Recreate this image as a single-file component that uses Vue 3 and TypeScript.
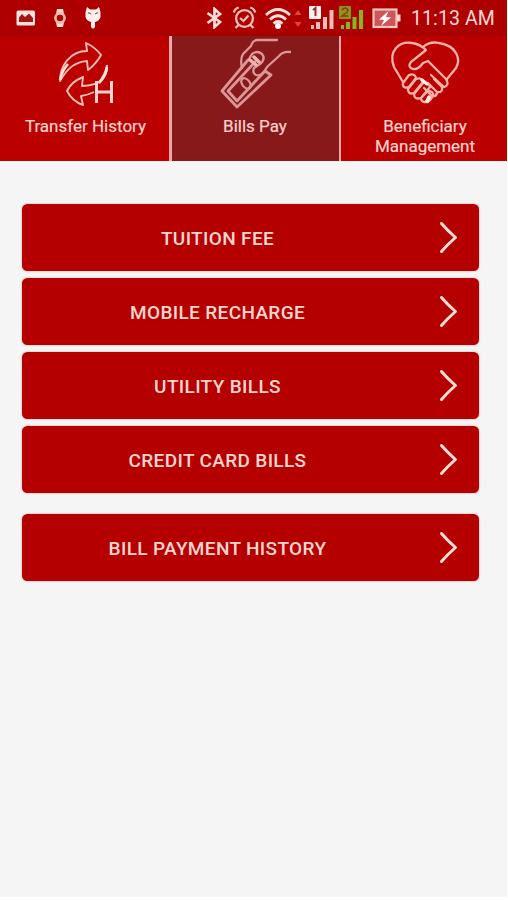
<script setup lang="ts">
interface Bill {
  label: string
  separate?: boolean
}

const bills: Bill[] = [
  { label: 'TUITION FEE' },
  { label: 'MOBILE RECHARGE' },
  { label: 'UTILITY BILLS' },
  { label: 'CREDIT CARD BILLS' },
  { label: 'BILL PAYMENT HISTORY', separate: true },
]
</script>

<template>
  <div class="screen">
    <header class="status">
      <div class="notices">
        <svg width="20" height="18" viewBox="0 0 20 18">
          <rect x="0.5" y="1.5" width="18.5" height="15" rx="1.5" fill="#fbe4e0" />
          <path d="M3 13V8.500l3-3.500 3 3 4-3.500 4 4.500v4z" fill="#a51512" />
        </svg>
        <svg width="14" height="20" viewBox="0 0 14 20">
          <path d="M4 1h6l1 5H3zM3 14h8l-1 5H4z" fill="#fbdcd8" />
          <circle cx="7" cy="10" r="4.6" fill="#a80808" stroke="#f5b7b0" stroke-width="2.600" />
        </svg>
        <svg width="18" height="24" viewBox="0 0 18 24">
          <path d="M3 1l3 2.500h6L15 1l1.500 5v5q-1 4-5.500 5v5q-2 3-4 0v-5q-4.500-1-5.500-5V6z" fill="#fff0ed" />
          <path d="M4 6.500L7 8M14 6.500L11 8" stroke="#a84d42" stroke-width="1.200" />
        </svg>
      </div>
      <div class="system">
        <svg class="bluetooth" width="16" height="22" viewBox="0 0 16 22" fill="none" stroke="#f8dddd" stroke-width="2.700">
          <path d="M1.500 6L14 15l-5.500 5V2L14 7 1.500 16" />
        </svg>
        <svg class="alarm" width="25" height="24" viewBox="0 0 25 24" fill="none" stroke="#f4bdb9" stroke-width="2.300">
          <circle cx="12.500" cy="12.500" r="8.400" />
          <path d="M8 12l3.500 3 5-5.500M1.800 6.500q1-4 5-5M23.200 6.500q-1-4-5-5M6.500 19l-3 3M18.500 19l3 3" />
        </svg>
        <svg class="wifi" width="28" height="24" viewBox="0 0 28 24" fill="none" stroke="#fae0dd" stroke-width="2.800">
          <path d="M2 9q12-11 24 0M6 13.500q8-7.500 16 0M9.500 17.500q4.500-4 9 0" />
          <circle cx="14" cy="20" r="3" fill="#fff" stroke="none" />
        </svg>
        <svg class="traffic" width="8" height="20" viewBox="0 0 8 20" fill="#e0443f">
          <path d="M4 2l3.500 5h-7zM4 19l3.500-5h-7z" />
        </svg>
        <svg class="signal" width="26" height="26" viewBox="0 0 26 26">
          <path d="M2 20h3v4H2zM7 17h4v7H7zM14 12h4v12h-4zM20.500 5h4v19h-4z" fill="#f0bdb8" />
          <rect width="12" height="13" y="1" rx="1" fill="#fff0ee" />
          <path d="M4 5l2.500-2v8" fill="none" stroke="#8f302e" stroke-width="2" />
        </svg>
        <svg class="signal" width="26" height="26" viewBox="0 0 26 26">
          <path d="M2 20h3v4H2zM7 17h4v7H7zM13.500 12h4v12h-4zM20 5h4v19h-4z" fill="#86b51c" />
          <rect width="12" height="13" y="1" rx="1" fill="#7f9a14" />
          <path d="M3 5q3-4 6 0q0 2-6 6h6" fill="none" stroke="#a82d08" stroke-width="1.500" />
        </svg>
        <svg class="battery" width="29" height="21" viewBox="0 0 29 21">
          <rect x="1.500" y="1.500" width="23" height="17.500" fill="#cf5556" stroke="#f2c6c1" stroke-width="2.200" />
          <path d="M25 6.500h3.500v7H25z" fill="#f8d5d1" />
          <path d="M16.500 3L7 11.500l5 .5-3 6 10-8.500-5-.5z" fill="#fff" />
        </svg>
        <time>11:13 AM</time>
      </div>
    </header>

    <nav class="tabs">
      <div class="tab">
        <svg class="tab-icon" width="169" height="77" viewBox="0 36 169 77" fill="none" stroke="#f7bcb6" stroke-width="1.900" stroke-linejoin="round">
          <path d="M60 81C60 66 70 51 87 51L86 43Q95 47 101 55Q96 64 88 70L87 61C74 62 67 69 60 81Z" />
          <path d="M107 65Q108 85 82 86L83 77Q71 82 67 91Q72 101 83 105L81 96Q88 95 94 92M107 65Q105 76 98 83" />
          <path d="M60 80Q62 71 68 64M107 67Q106 76 99 83" stroke="#ffe3db" stroke-width="2.500" />
          <path d="M96.500 81V103M111.500 81V103M96 92H112" stroke="#f9d4d0" stroke-width="3" stroke-linejoin="miter" />
        </svg>
        <span>Transfer History</span>
      </div>
      <div class="tab active">
        <svg class="tab-icon" width="167" height="77" viewBox="172 36 167 77" fill="none" stroke="#dd9696" stroke-width="2.300" stroke-linejoin="round" stroke-linecap="round">
          <path d="M277 40H257Q253 40 251 46L243 54Q240 59 242 68M290 52Q283 51 279 56L267 67Q262 77 256 75Q252 73 254 68L260 64Q266 59 262 54Q257 50 252 54L249 59" />
          <path d="M248 60L222 91L237 107L271 75L265 71L237 101L228 91L255 62" stroke-width="2.800" />
          <ellipse cx="246" cy="83.500" rx="3.800" ry="6" transform="rotate(-38 246 83.500)" />
          <path d="M250 60L256 65M254 57L259 62" stroke="#edb4b0" stroke-width="3.500" />
        </svg>
        <span>Bills Pay</span>
      </div>
      <div class="tab">
        <svg class="tab-icon" width="166" height="77" viewBox="341 36 166 77" fill="none" stroke="#f9b1aa" stroke-width="2.300" stroke-linejoin="round" stroke-linecap="round">
          <path d="M403 82L394 67C388 51 399 41 412 43Q420 44 426 50L411 62Q407 67 413 69Q418 70 423 63L428 61L446 79Q450 85 444 87L431 75" />
          <path d="M423 47Q430 41 439 43C457 46 461 59 456 68L447 79" />
          <path d="M434 79L442 87Q443 93 437 92L428 83M437 92Q437 97 432 96L424 88M432 96Q431 102 424 102" />
          <path d="M403 83L409 75Q415 73 416 78L409 87Q402 89 403 83M408 89L416 79Q422 77 423 82L414 93Q408 95 408 89M414 94L423 83Q429 82 430 87L421 98Q414 100 414 94M421 98L428 91Q434 91 433 96L428 102Q421 103 421 98" />
          <path d="M422 80L427 84M429 97L427 101" stroke="#fff0e9" stroke-width="3.500" />
        </svg>
        <span>Beneficiary<br>Management</span>
      </div>
    </nav>

    <main class="bills">
      <button v-for="bill in bills" :key="bill.label" class="bill" :class="{ separate: bill.separate }">
        <span class="bill-label">{{ bill.label }}</span>
        <svg class="chevron" width="24" height="36" viewBox="0 0 24 36" fill="none" stroke="#fbdcd6" stroke-width="3" stroke-linecap="round" stroke-linejoin="round">
          <path d="M3.500 4.500Q9 11 17.500 18.500Q9 26 3.500 32.500" />
        </svg>
      </button>
    </main>
  </div>
</template>

<style>
body {
  background: #fff;
}
</style>

<style scoped>
.screen {
  width: 507px;
  height: 897px;
  background: #f5f5f5;
  font-family: Roboto, "Liberation Sans", sans-serif;
  overflow: hidden;
}

.status {
  height: 36px;
  padding: 0 9px 0 16px;
  box-sizing: border-box;
  display: flex;
  justify-content: space-between;
  align-items: center;
  background: linear-gradient(#ae0000 82%, #a40000);
}

.status svg {
  display: block;
  flex: none;
}

.notices {
  display: flex;
  align-items: center;
  gap: 17px;
}

.system {
  display: flex;
  align-items: center;
}

.alarm {
  margin-left: 10px;
}

.wifi {
  margin-left: 7px;
}

.traffic {
  margin-left: 2px;
}

.signal {
  margin-left: 7px;
}

.signal + .signal {
  margin-left: 4px;
}

.battery {
  margin-left: 7px;
}

time {
  width: 87px;
  margin-left: 10px;
  padding-top: 1px;
  color: #fbdad6;
  font-size: 19.500px;
  letter-spacing: 0.100px;
  white-space: nowrap;
}

.tabs {
  height: 125px;
  display: grid;
  grid-template-columns: 169px 167px 166px;
  column-gap: 2.500px;
  background: #f0aaaa;
}

.tab {
  background: #bb0000;
  color: #fbd3cf;
  font-size: 17px;
  line-height: 19.500px;
  text-align: center;
  -webkit-text-stroke: 0.200px #fbd3cf;
}

.tab.active {
  background: #87191b;
}

.tab-icon {
  display: block;
  margin-bottom: 4px;
}

.tab span {
  display: block;
}

.tab:first-child span,
.tab:last-child span {
  padding-left: 2px;
}

.bills {
  padding: 43px 28.500px 0 21.500px;
  display: flex;
  flex-direction: column;
  gap: 7.500px;
}

.bill {
  height: 66.500px;
  padding: 0 17px 0 0;
  border: 0;
  border-radius: 5.500px;
  background: #b50000;
  box-shadow: 0 0 2px #e78d8d;
  display: flex;
  align-items: center;
  font-family: inherit;
}

.bill.separate {
  margin-top: 14px;
}

.bill-label {
  width: 392px;
  padding-top: 2px;
  color: #fbd6d1;
  font-size: 19px;
  font-weight: 500;
  letter-spacing: 0.350px;
  text-align: center;
}

.chevron {
  margin-left: auto;
}
</style>
